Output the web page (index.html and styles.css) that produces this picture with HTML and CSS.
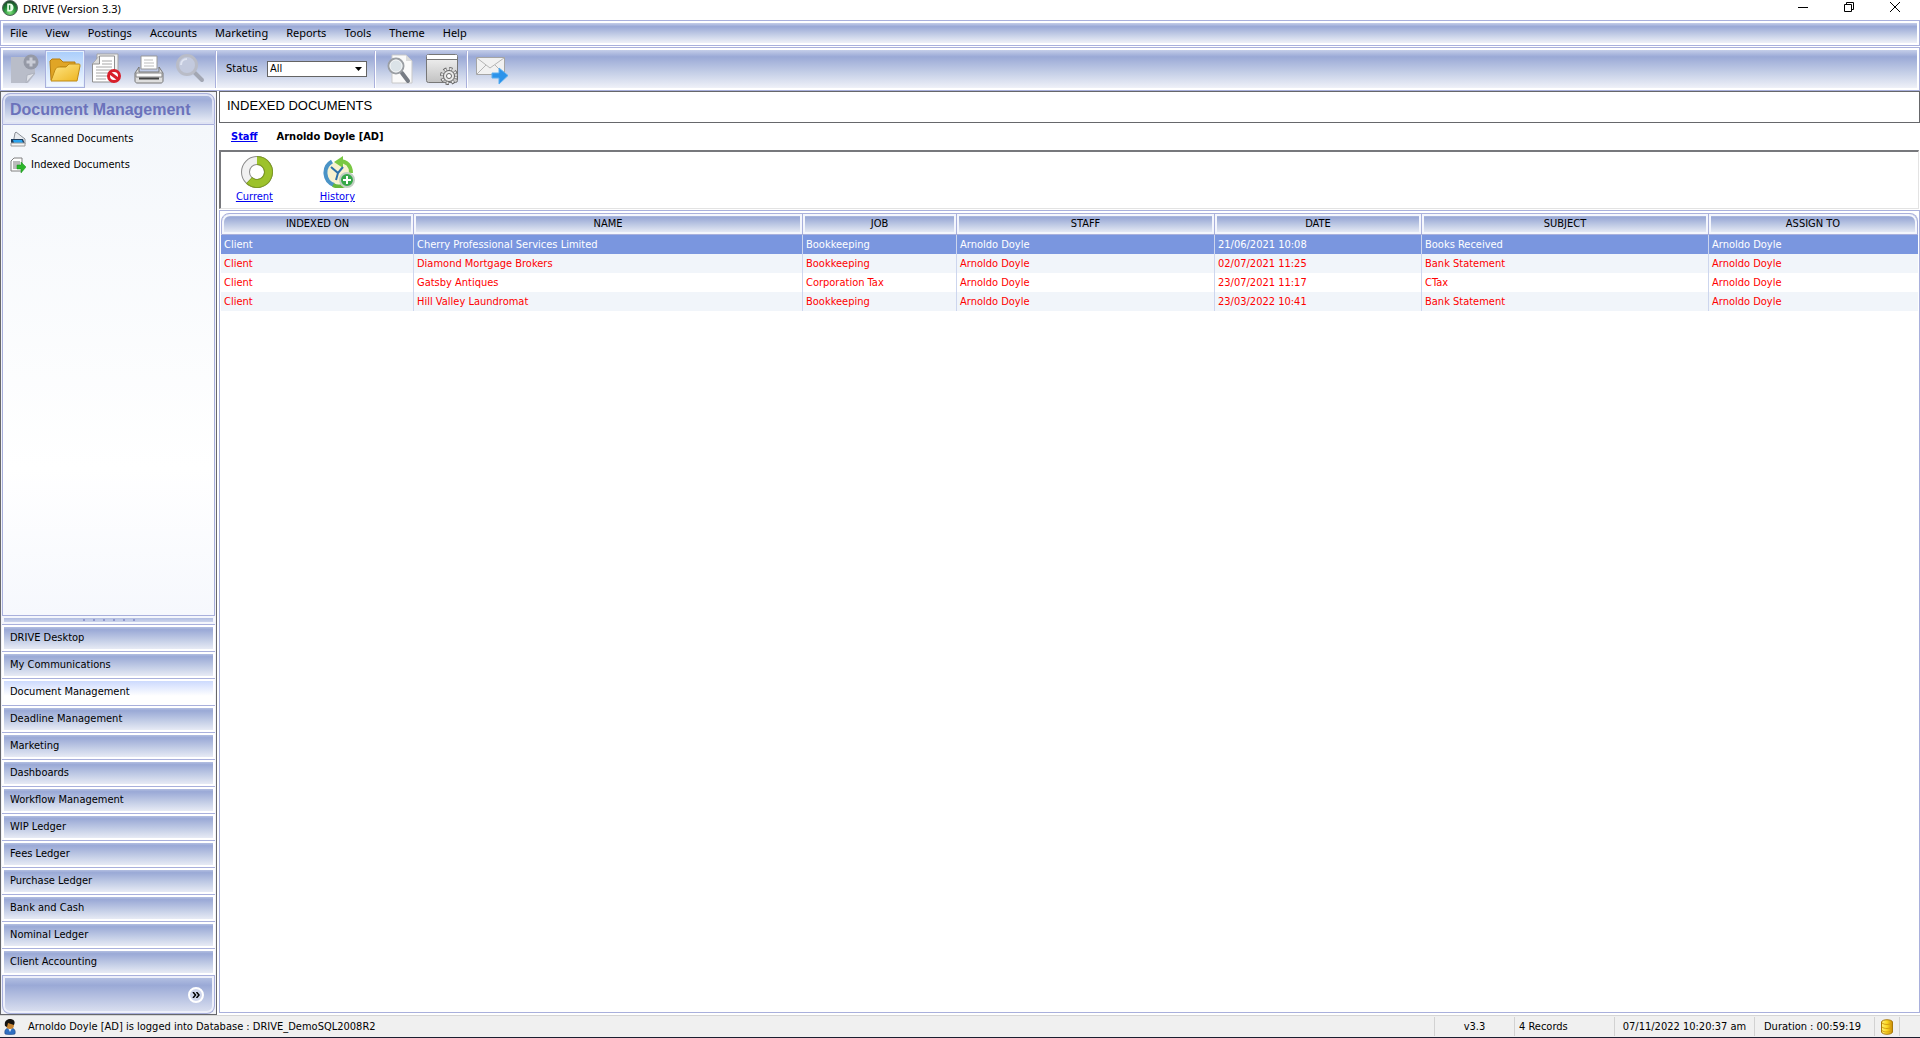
FILE: index.html
```html
<!DOCTYPE html>
<html lang="en">
<head>
<meta charset="utf-8">
<title>DRIVE (Version 3.3)</title>
<link rel="stylesheet" href="styles.css">
</head>
<body>
<header class="titlebar">
  <svg class="app-icon" width="16" height="16" viewBox="0 0 16 16" aria-hidden="true">
    <defs><radialGradient id="orb" cx="50%" cy="80%" r="75%"><stop offset="0" stop-color="#7fe07a"/><stop offset=".55" stop-color="#1f8a35"/><stop offset="1" stop-color="#1d4a2b"/></radialGradient></defs>
    <circle cx="8" cy="8" r="7.5" fill="url(#orb)" stroke="#52635a"/>
    <path d="M5.2 3.5h2.6c5 0 5 8 0 8H5.2zM7 5v5" fill="#e9ffe9"/><path d="M7.6 5.2v4.6" stroke="#23803a" stroke-width="1.4"/>
  </svg>
  <span class="title">DRIVE (Version 3.3)</span>
  <div class="window-buttons">
    <button aria-label="Minimise"><svg width="12" height="12" viewBox="0 0 12 12"><path d="M1 6.500h10" stroke="#000"/></svg></button>
    <button aria-label="Restore"><svg width="12" height="12" viewBox="0 0 12 12"><path d="M1.500 3.500h7v7h-7zM3.500 3V1.500h7v7H9" fill="none" stroke="#000"/></svg></button>
    <button aria-label="Close"><svg width="12" height="12" viewBox="0 0 12 12"><path d="M1 1l10 10M11 1L1 11" stroke="#000"/></svg></button>
  </div>
</header>

<nav class="bar menubar" aria-label="Main menu">
  <button>File</button><button>View</button><button>Postings</button><button>Accounts</button><button>Marketing</button><button>Reports</button><button>Tools</button><button>Theme</button><button>Help</button>
</nav>

<div class="bar toolbar">
  <button class="tool" aria-label="New document" disabled>
    <svg width="32" height="32" viewBox="0 0 32 32"><path d="M4 4h24v17l-7 9H4z" fill="#b9bdc9"/><path d="M19 30l1-8 8-2z" fill="#dfe1e8" stroke="#aeb2be"/><circle cx="24" cy="9" r="7.500" fill="#9599a6"/><path d="M24 4.500v9M19.500 9h9" stroke="#c9ccd6" stroke-width="3"/></svg>
  </button>
  <button class="tool active" aria-label="Open folder">
    <svg width="32" height="32" viewBox="0 0 32 32"><defs><linearGradient id="fold" x1="0" y1="0" x2="1" y2="1"><stop offset="0" stop-color="#ffe88a"/><stop offset="1" stop-color="#eeb41f"/></linearGradient></defs><path d="M2 27L1 8l2-2h8l3 3h12v5H11z" fill="#e0a526" stroke="#b77c0c"/><path d="M2 28l4-11c1-2 2-3 4-3h7l3-3h10c1 0 1 1 1 2l-3 15z" fill="url(#fold)" stroke="#c08a14"/></svg>
  </button>
  <button class="tool" aria-label="Remove document">
    <svg width="32" height="32" viewBox="0 0 32 32"><path d="M6 1h21v27H6z" fill="#f2f2f2" stroke="#a5a5a5"/><path d="M1.500 11l7-8h15v26h-22z" fill="#fff" stroke="#8f8f8f"/><path d="M1.500 11h7V3" fill="#ddd" stroke="#8f8f8f"/><path d="M11 8h10M11 11h10M5 14h16M5 17h16M5 20h14M5 23h12M5 26h10" stroke="#a7a7a7"/><circle cx="23" cy="23" r="5.500" fill="#fff" stroke="#d81f2a" stroke-width="3"/><path d="M19 20l8 6" stroke="#d81f2a" stroke-width="3"/></svg>
  </button>
  <button class="tool" aria-label="Print">
    <svg width="32" height="32" viewBox="0 0 32 32"><path d="M8 3h16v13H8z" fill="#fff" stroke="#9a9a9a"/><path d="M11 7h9M11 10h10M11 13h10" stroke="#bdbdbd"/><path d="M6 14L2 20v8c0 1 1 2 2 2h24c1 0 2-1 2-2v-8l-4-6v5H6z" fill="#dedede" stroke="#777"/><path d="M3 20h26v4H3z" fill="#fafafa" stroke="#888"/><path d="M6 25.500h20" stroke="#444" stroke-width="2"/></svg>
  </button>
  <button class="tool" aria-label="Search" disabled>
    <svg width="32" height="32" viewBox="0 0 32 32"><path d="M20 20l7 7" stroke="#a3a7b3" stroke-width="4" stroke-linecap="round"/><circle cx="12" cy="12" r="9.500" fill="#c3cade" stroke="#b9bcc7" stroke-width="3"/><path d="M6 12c0-4 3-6 6-6" stroke="#dfe4f1" stroke-width="2" fill="none"/></svg>
  </button>
  <span class="divider"></span>
  <label class="status-label" for="status">Status</label>
  <span class="combo"><select id="status"><option>All</option></select><svg width="7" height="4" viewBox="0 0 7 4" aria-hidden="true"><path d="M0 0h7L3.500 4z"/></svg></span>
  <span class="divider"></span>
  <button class="tool" aria-label="Preview document">
    <svg width="32" height="32" viewBox="0 0 32 32"><path d="M8 2h14l6 6v22H8z" fill="#fafafa" stroke="#c9c9c9"/><path d="M22 2v6h6z" fill="#dcdcdc"/><path d="M18 20l6 8" stroke="#777c84" stroke-width="4" stroke-linecap="round"/><circle cx="12" cy="13" r="7.500" fill="#dbe3e8" stroke="#9a9ea3" stroke-width="2"/><circle cx="12" cy="13" r="6" fill="none" stroke="#f3f5f6"/></svg>
  </button>
  <button class="tool" aria-label="Settings">
    <svg width="32" height="32" viewBox="0 0 32 32"><defs><linearGradient id="pane" x2="0" y2="1"><stop offset="0" stop-color="#f5f5f5"/><stop offset="1" stop-color="#c2c2c2"/></linearGradient></defs><rect x=".5" y="1.500" width="31" height="28" rx="2" fill="url(#pane)" stroke="#777"/><path d="M1 2h30v4H1z" fill="#fff"/><path d="M1 6.500h30" stroke="#777"/><circle cx="23" cy="23" r="7" fill="none" stroke="#666" stroke-width="4" stroke-dasharray="3 2.500"/><circle cx="23" cy="23" r="5.500" fill="#e9e9e9" stroke="#666"/><circle cx="23" cy="23" r="7" fill="none" stroke="#e9e9e9" stroke-width="2" stroke-dasharray="2 3.500" stroke-dashoffset="-.5"/><circle cx="23" cy="23" r="2.500" fill="#fff" stroke="#666"/></svg>
  </button>
  <span class="divider"></span>
  <button class="tool" aria-label="Send mail">
    <svg width="32" height="32" viewBox="0 0 32 32"><path d="M.500 4.500h28v17h-28z" fill="#f1f1f1" stroke="#a5a5a5"/><path d="M1 5l13 10L28 5M1 21l9-9M28 21l-9-9" fill="none" stroke="#b5b5b5"/><path d="M16 20h7v-5l9 7.500-9 8.500v-6h-7z" fill="#2c93ea" stroke="#5aaef0"/></svg>
  </button>
</div>

<div class="workspace">
  <aside class="sidebar">
    <h2 class="side-title">Document Management</h2>
    <div class="side-links">
      <a href="#scanned"><svg width="16" height="16" viewBox="0 0 16 16" aria-hidden="true"><path d="M5 2l1-1 9 7v5H3z" fill="#e8ebef" stroke="#8b9097"/><path d="M1 8l12 0 2 5H1z" fill="#1e3c5c"/><path d="M3 9h9l1 3H4z" fill="#29a3ee"/><path d="M1 12h14v3H1z" fill="#f4f4f4" stroke="#9a9a9a"/></svg>Scanned Documents</a>
      <a href="#indexed"><svg width="16" height="16" viewBox="0 0 16 16" aria-hidden="true"><path d="M1 4l3-3h8v13H1z" fill="#fff" stroke="#808080"/><path d="M3 5h7M3 7h7M3 9h5M3 11h4" stroke="#777"/><path d="M7 8h4V5l5 5-5 6v-4H7z" fill="#2bb52b" stroke="#159015" stroke-width=".500"/></svg>Indexed Documents</a>
    </div>
    <div class="splitter"><i></i><i></i><i></i><i></i><i></i><i></i></div>
    <nav class="modules" aria-label="Modules">
      <button>DRIVE Desktop</button>
      <button>My Communications</button>
      <button class="current">Document Management</button>
      <button>Deadline Management</button>
      <button>Marketing</button>
      <button>Dashboards</button>
      <button>Workflow Management</button>
      <button>WIP Ledger</button>
      <button>Fees Ledger</button>
      <button>Purchase Ledger</button>
      <button>Bank and Cash</button>
      <button>Nominal Ledger</button>
      <button>Client Accounting</button>
    </nav>
    <div class="side-foot"><button aria-label="More modules"><svg width="8" height="6" viewBox="0 0 8 6"><path d="M1 0l2.500 3L1 6M4.500 0L7 3 4.500 6" fill="none" stroke="#000" stroke-width="1.500"/></svg></button></div>
  </aside>

  <main class="content">
    <h1 class="page-title">INDEXED DOCUMENTS</h1>
    <div class="staff"><a href="#staff">Staff</a><span>Arnoldo Doyle [AD]</span></div>
    <div class="views">
      <a href="#current">
        <svg width="32" height="32" viewBox="0 0 32 32" aria-hidden="true"><circle cx="16" cy="16" r="11.500" fill="none" stroke="#8c8c8c" stroke-width="9"/><circle cx="16" cy="16" r="11.500" fill="none" stroke="#f1f1f1" stroke-width="7"/><path d="M16 4.500A11.500 11.500 0 1 1 8 24.300" fill="none" stroke="#7d9a22" stroke-width="9"/><path d="M16 4.500A11.500 11.500 0 1 1 8.500 24.700" fill="none" stroke="#9dc22b" stroke-width="7"/></svg>
        Current</a>
      <a href="#history">
        <svg width="32" height="32" viewBox="0 0 32 32" aria-hidden="true"><circle cx="15" cy="17" r="11" fill="#f8f2cf"/><path d="M9 5.500A13 13 0 0 0 11 29" fill="none" stroke="#4a93c6" stroke-width="4"/><path d="M10 29a13 13 0 0 0 12 0" fill="none" stroke="#66b83b" stroke-width="4"/><path d="M16 5c8 0 12 5 12 12" fill="none" stroke="#79c843" stroke-width="4"/><path d="M20 0v12L11 6z" fill="#79c843"/><path d="M8 11l7 6 5-6M15 17l-2 7" fill="none" stroke="#2d70a9" stroke-width="2"/><circle cx="24" cy="24" r="7" fill="#35a848" stroke="#c3cec3" stroke-width="2"/><path d="M24 20v8M20 24h8" stroke="#fff" stroke-width="2"/></svg>
        History</a>
    </div>
    <div class="grid">
      <table>
        <colgroup><col class="c-indexed"><col><col class="c-job"><col class="c-staff"><col class="c-date"><col class="c-subject"><col class="c-assign"></colgroup>
        <thead><tr><th>INDEXED ON</th><th>NAME</th><th>JOB</th><th>STAFF</th><th>DATE</th><th>SUBJECT</th><th>ASSIGN TO</th></tr></thead>
        <tbody>
          <tr class="selected"><td>Client</td><td>Cherry Professional Services Limited</td><td>Bookkeeping</td><td>Arnoldo Doyle</td><td>21/06/2021 10:08</td><td>Books Received</td><td>Arnoldo Doyle</td></tr>
          <tr><td>Client</td><td>Diamond Mortgage Brokers</td><td>Bookkeeping</td><td>Arnoldo Doyle</td><td>02/07/2021 11:25</td><td>Bank Statement</td><td>Arnoldo Doyle</td></tr>
          <tr><td>Client</td><td>Gatsby Antiques</td><td>Corporation Tax</td><td>Arnoldo Doyle</td><td>23/07/2021 11:17</td><td>CTax</td><td>Arnoldo Doyle</td></tr>
          <tr><td>Client</td><td>Hill Valley Laundromat</td><td>Bookkeeping</td><td>Arnoldo Doyle</td><td>23/03/2022 10:41</td><td>Bank Statement</td><td>Arnoldo Doyle</td></tr>
        </tbody>
      </table>
    </div>
  </main>
</div>

<footer class="statusbar">
  <div class="user">
    <svg width="12" height="16" viewBox="0 0 12 16" aria-hidden="true"><path d="M1 15c-1-4 1-6 5-6s6 2 5 6c-3 1-7 1-10 0z" fill="#2f6fc0" stroke="#1c3f74" stroke-width=".500"/><path d="M4 9h4l-2 4z" fill="#e8eef8"/><circle cx="6" cy="6" r="4" fill="#c98532"/><path d="M1 7C0 2 3 0 6 0s6 2 4 6C8 5 6 5 4 4L3 8z" fill="#15120f"/></svg>
    <span>Arnoldo Doyle [AD] is logged into Database : DRIVE_DemoSQL2008R2</span>
  </div>
  <div class="cell version">v3.3</div>
  <div class="cell records">4 Records</div>
  <div class="cell clock">07/11/2022 10:20:37 am</div>
  <div class="cell duration">Duration : 00:59:19</div>
  <div class="cell database"><svg width="12" height="16" viewBox="0 0 12 16" aria-hidden="true"><defs><linearGradient id="gold"><stop offset="0" stop-color="#fff27a"/><stop offset=".5" stop-color="#fcd820"/><stop offset="1" stop-color="#c98a06"/></linearGradient></defs><path d="M.5 3C1 0 11 0 11.500 3v10c-.5 3-10.500 3-11 0z" fill="url(#gold)" stroke="#a9790b"/><path d="M1 4c2 2 8 2 10 0M1 8c2 2 8 2 10 0M1 11.500c2 2 8 2 10 0" fill="none" stroke="#d69e10"/></svg></div>
  <div class="cell grip"></div>
</footer>
</body>
</html>
```
FILE: styles.css
```css
:root {
  --line: #a9b0dc;
  --bar: linear-gradient(#c5cee9, #9aa9d6 18%, #c5cfe7 60%, #eff1f8);
  --dark: #66676b;
}
* { box-sizing: border-box; }
body {
  margin: 0;
  min-height: 100vh;
  display: flex;
  flex-direction: column;
  font: 11px/14px "DejaVu Sans Condensed", "DejaVu Sans", sans-serif;
  color: #000;
  background: #fff;
}
button {
  margin: 0;
  padding: 0;
  border: 0;
  background: none;
  font: inherit;
  color: inherit;
}
svg { display: block; flex: none; }

.titlebar {
  display: flex;
  align-items: center;
  height: 20px;
  padding-left: 2px;
  gap: 5px;
  font-family: "Noto Sans", sans-serif;
}
.app-icon { align-self: flex-start; }
.title { padding-bottom: 2px; }
.window-buttons { margin-left: auto; display: flex; padding: 0 2px 6px 0; }
.window-buttons button { width: 46px; display: flex; justify-content: center; }

.bar {
  border: 1px solid var(--line);
  padding: 2px;
  background: var(--bar) content-box, #fff;
  display: flex;
  align-items: center;
}
.menubar { height: 26px; font-family: "Noto Sans", sans-serif; }
.menubar button { padding: 0 11px 0 7px; }
.toolbar { height: 44px; margin-top: 1px; gap: 2px; }
.tool {
  width: 40px;
  height: 38px;
  border: 1px solid transparent;
  display: flex;
  align-items: center;
  justify-content: center;
}
.tool.active {
  border-color: var(--line);
  background: linear-gradient(#a9cdfb, #f4f9ff);
  box-shadow: inset 0 0 0 1px #e3effd;
}
.divider {
  width: 2px;
  height: 37px;
  margin: 0 2px;
  border-left: 1px solid var(--line);
  background: #fff;
}
.status-label { margin: 0 5px; width: 34px; }
.combo { display: flex; align-items: center; position: relative; margin-right: 3px; }
.combo select {
  appearance: none;
  width: 100px;
  height: 16px;
  padding: 0 2px;
  border: 1px solid #646464;
  border-radius: 0;
  background: #fff;
  font: inherit;
  line-height: 14px;
  color: #000;
}
.combo svg { position: absolute; right: 5px; pointer-events: none; }

.workspace { flex: 1; display: flex; gap: 2px; }
.sidebar {
  width: 217px;
  flex: none;
  display: flex;
  flex-direction: column;
  border: 1px solid var(--dark);
  padding: 1px 1px 0;
  background: #f2f3f8;
}
.side-title {
  margin: 0;
  height: 32px;
  padding: 0 7px;
  font: bold 16px/32px "Liberation Sans", Arial, sans-serif;
  color: #6b72bb;
  border: 1px solid var(--line);
  border-radius: 8px 8px 0 0;
  background: linear-gradient(#aab8de, #9fadd8 20%, #c5cfe7 60%, #eff1f8);
  box-shadow: inset 0 0 0 2px #dfe3f4;
}
.side-links {
  flex: 1;
  border: solid var(--line);
  border-width: 0 1px;
  padding: 1px 7px;
  background: linear-gradient(#f4f7fb, #fff 70%, #f6f8fd);
}
.side-links a {
  display: flex;
  align-items: center;
  gap: 5px;
  height: 26px;
  color: #000;
  text-decoration: none;
}
.splitter {
  height: 10px;
  border: solid var(--line);
  border-width: 1px 0;
  padding: 2px;
  background: linear-gradient(#b1bde1, #ccd4ec) content-box, #f4f6fc;
  display: flex;
  justify-content: center;
  align-items: center;
  gap: 8px;
}
.splitter i { width: 2px; height: 2px; background: #8f97cd; }
.modules { display: flex; flex-direction: column; }
.modules button {
  height: 27px;
  padding: 2px;
  padding-left: 8px;
  border-bottom: 1px solid var(--line);
  text-align: left;
  background: var(--bar) padding-box;
  box-shadow: inset 0 0 0 2px #fff;
}
.modules .current { background: linear-gradient(#c6d5fd, #fff 65%) padding-box; }
.side-foot {
  height: 38px;
  display: flex;
  align-items: center;
  justify-content: flex-end;
  padding-right: 10px;
  border: 1px solid var(--line);
  border-top: 0;
  border-radius: 0 0 8px 8px;
  background: linear-gradient(#b9c5e5, #9aa9d6 25%, #dde2f1);
  box-shadow: inset 0 0 0 2px #eef0fa;
}
.side-foot button {
  width: 16px;
  height: 16px;
  border: 2px solid #fff;
  border-radius: 8px;
  background: #cfd6ec;
  display: flex;
  align-items: center;
  justify-content: center;
}

.content { flex: 1; min-width: 0; display: flex; flex-direction: column; background: #fff; }
.page-title {
  margin: 0;
  height: 32px;
  padding: 0 7px;
  border: 1px solid var(--dark);
  font: 13px/28px "Liberation Sans", Arial, sans-serif;
}
.staff {
  height: 27px;
  display: flex;
  align-items: center;
  gap: 19px;
  padding-left: 12px;
  font-weight: bold;
}
a { color: #0000f0; }
.views {
  height: 59px;
  margin: 0 1px 1px 0;
  padding: 4px 0 0 14px;
  border: 2px solid #77787c;
  border-right: 1px solid #e3e3e3;
  border-bottom: 1px solid #e3e3e3;
  display: flex;
  gap: 44px;
}
.views a { display: flex; flex-direction: column; align-items: flex-end; gap: 2px; min-width: 38px; }
.grid { flex: 1; border: 1px solid var(--line); padding: 2px 1px; margin-bottom: 2px; }
table { width: 100%; border-collapse: separate; border-spacing: 0; table-layout: fixed; }
.c-indexed { width: 193px; }
.c-job { width: 154px; }
.c-staff { width: 258px; }
.c-date { width: 207px; }
.c-subject { width: 287px; }
.c-assign { width: 209px; }
th {
  height: 22px;
  padding: 0;
  font-weight: normal;
  border: solid var(--line);
  border-width: 1px 1px 1px 0;
  background: var(--bar) padding-box;
  box-shadow: inset 0 0 0 2px #f4f6fc;
}
th:first-child { border-left-width: 1px; border-top-left-radius: 8px; }
th:last-child { border-top-right-radius: 8px; }
td {
  height: 19px;
  padding: 0 3px;
  color: #f00;
  border-right: 1px solid #cdd6ee;
  white-space: nowrap;
}
td:last-child { border-right: 0; }
tr:nth-child(even) td { background: #f1f5fa; }
.selected td { background: #7a96df; color: #fff; }

.statusbar {
  display: flex;
  align-items: center;
  height: 23px;
  border-top: 1px solid #d5d5d5;
  border-bottom: 1px solid #1c1e30;
  background: #f0f0f0;
}
.user { flex: 1; display: flex; align-items: center; gap: 12px; padding-left: 4px; }
.cell { height: 19px; line-height: 20px; border-left: 1px solid #d2d2d2; white-space: nowrap; }
.version { width: 80px; text-align: center; }
.records { width: 100px; padding-left: 4px; }
.clock { width: 140px; text-align: center; }
.duration { width: 120px; padding-left: 9px; }
.database { width: 25px; display: flex; align-items: center; justify-content: center; }
.grip { width: 21px; }
```
